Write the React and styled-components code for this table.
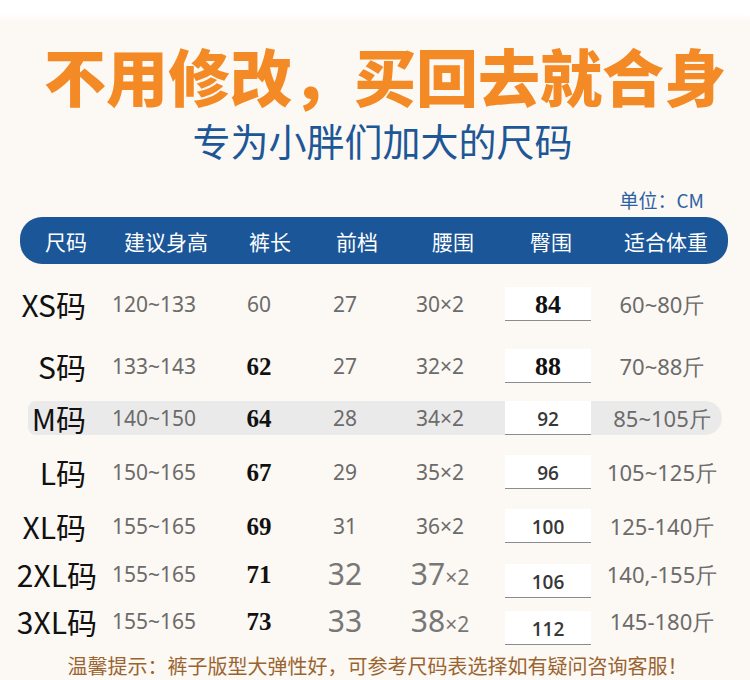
import React from 'react'
import styled, { createGlobalStyle } from 'styled-components'

const Global = createGlobalStyle`
  html, body {
    margin: 0;
    padding: 0;
  }
  body {
    background: #fcf8f3;
    font-family: "Noto Sans", "Noto Sans CJK SC", sans-serif;
  }
`

const Page = styled.div`
  width: 750px;
  height: 680px;
  overflow: hidden;
  background: linear-gradient(#ffffff 0, #ffffff 14px, #fcf8f3 22px);
  display: flex;
  flex-direction: column;
`

const Title = styled.h1`
  margin: 41px 0 0 0;
  padding-left: 20px;
  font-family: "Noto Sans CJK SC", sans-serif;
  font-weight: 900;
  font-size: 62px;
  line-height: 68px;
  color: #f38a25;
  text-align: center;
  white-space: nowrap;
`

const Subtitle = styled.h2`
  margin: 10px 0 0 0;
  padding-left: 15px;
  font-family: "Noto Sans CJK SC", sans-serif;
  font-weight: 400;
  font-size: 38px;
  line-height: 42px;
  color: #1d5797;
  text-align: center;
`

const Unit = styled.div`
  margin-top: 29px;
  padding-right: 46px;
  text-align: right;
  font-family: "Noto Sans CJK SC", sans-serif;
  font-size: 19px;
  line-height: 1;
  color: #2c62a5;
`

const HeaderBar = styled.div`
  margin: 8px 22px 0 20px;
  height: 47px;
  border-radius: 22px;
  background: #1a5698;
  display: grid;
  grid-template-columns: 92px 108px 100px 74px 118px 78px 1fr;
  align-items: center;
`

const HeadCell = styled.div`
  text-align: center;
  color: #ffffff;
  font-family: "Noto Sans CJK SC", sans-serif;
  font-size: 21px;
  padding-left: ${p => p.$pad || 0}px;
`

const Body = styled.div`
  margin-top: 7px;
  display: flex;
  flex-direction: column;
`

const Row = styled.div`
  margin: ${p => p.$top || 0}px 28px 0 28px;
  height: ${p => p.$h}px;
  display: grid;
  grid-template-columns: 72px 108px 102px 70px 120px 96px 1fr;
  grid-template-rows: minmax(0, 1fr);
  align-items: center;
  background: ${p => (p.$hl ? '#ebeaea' : 'transparent')};
  border-radius: 8px 17px 17px 8px;
`

const Size = styled.div`
  display: flex;
  justify-content: flex-end;
  padding-right: ${p => (p.$wide ? 3 : 14)}px;
  font-family: "Noto Sans CJK SC", sans-serif;
  font-size: 30px;
  color: #111;
  white-space: nowrap;
  line-height: 1;
`

const Gray = styled.div`
  text-align: center;
  font-family: "Noto Sans", sans-serif;
  font-size: ${p => p.$fs || 21}px;
  color: ${p => (p.$fs > 25 ? '#777' : '#6b6b6b')};
  line-height: 1;
  white-space: nowrap;
  padding-left: ${p => p.$pad || 0}px;
`

const Small = styled.span`
  font-size: 21px;
`

const Bold = styled.div`
  text-align: center;
  font-family: "Liberation Serif", serif;
  font-weight: 700;
  font-size: 25px;
  color: #111;
  line-height: 1;
`

const HipCell = styled.div`
  display: flex;
  justify-content: center;
  margin-top: ${p => (p.$drop || 0) * 2}px;
`

const HipBox = styled.div`
  width: 86px;
  height: 34px;
  box-sizing: border-box;
  padding-top: 3px;
  background: #ffffff;
  border-bottom: 1.5px solid #8c8c8c;
  display: flex;
  align-items: center;
  justify-content: center;
  font-family: ${p => (p.$serif ? '"Liberation Serif", serif' : '"Open Sans", sans-serif')};
  font-weight: ${p => (p.$serif ? 700 : 600)};
  font-size: ${p => (p.$serif ? 26 : 19)}px;
  color: ${p => (p.$serif ? '#111' : '#383838')};
  line-height: 1;
`

const Footer = styled.div`
  margin-top: 17px;
  padding-left: 5px;
  text-align: center;
  font-family: "Noto Sans CJK SC", sans-serif;
  font-size: 20px;
  line-height: 24px;
  color: #9a6431;
  white-space: nowrap;
`

const heads = ['尺码', '建议身高', '裤长', '前档', '腰围', '臀围', '适合体重']

const rows = [
  { size: 'XS码', h: 66, height: '120~133', len: '60', plainLen: true, front: '27', waist: '30', hip: '84', serif: true, weight: '60~80斤' },
  { size: 'S码', h: 58, height: '133~143', len: '62', front: '27', waist: '32', hip: '88', serif: true, weight: '70~88斤' },
  { size: 'M码', h: 34, top: 6, hl: true, height: '140~150', len: '64', front: '28', waist: '34', hip: '92', weight: '85~105斤' },
  { size: 'L码', h: 74, height: '150~165', len: '67', front: '29', waist: '35', hip: '96', weight: '105~125斤' },
  { size: 'XL码', h: 34, height: '155~165', len: '69', front: '31', waist: '36', hip: '100', weight: '125-140斤' },
  { size: '2XL码', h: 62, wide: true, big: true, height: '155~165', len: '71', front: '32', waist: '37', hip: '106', drop: 7, weight: '140,-155斤' },
  { size: '3XL码', h: 32, wide: true, big: true, height: '155~165', len: '73', front: '33', waist: '38', hip: '112', drop: 7, weight: '145-180斤' },
]

export default function App() {
  return (
    <Page>
      <Global />
      <Title>不用修改，买回去就合身</Title>
      <Subtitle>专为小胖们加大的尺码</Subtitle>
      <Unit>单位：CM</Unit>
      <HeaderBar>
        {heads.map((t, i) => (
          <HeadCell key={t} $pad={i === 6 ? 14 : 0}>{t}</HeadCell>
        ))}
      </HeaderBar>
      <Body>
        {rows.map(r => (
          <Row key={r.size} $h={r.h} $top={r.top} $hl={r.hl}>
            <Size $wide={r.wide}>{r.size}</Size>
            <Gray>{r.height}</Gray>
            {r.plainLen ? <Gray>{r.len}</Gray> : <Bold>{r.len}</Bold>}
            <Gray $fs={r.big ? 30 : 0}>{r.front}</Gray>
            <Gray $fs={r.big ? 30 : 0}>
              {r.waist}
              {r.big ? <Small>×2</Small> : '×2'}
            </Gray>
            <HipCell $drop={r.drop}>
              <HipBox $serif={r.serif}>{r.hip}</HipBox>
            </HipCell>
            <Gray $pad={6} $fs={22}>{r.weight}</Gray>
          </Row>
        ))}
      </Body>
      <Footer>温馨提示：裤子版型大弹性好，可参考尺码表选择如有疑问咨询客服！</Footer>
    </Page>
  )
}
